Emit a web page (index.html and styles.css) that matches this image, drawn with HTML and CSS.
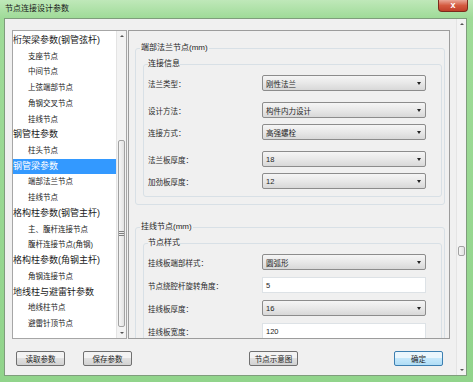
FILE: index.html
```html
<!DOCTYPE html>
<html lang="zh">
<head>
  <meta charset="UTF-8">
  <title>节点连接设计参数</title>
  <link rel="stylesheet" href="styles.css">
</head>
<body>
  <div class="window">
    <div class="titlebar">
      <span class="title">节点连接设计参数</span>
      <div class="close-btn">x</div>
    </div>

    <div class="client">
      <div class="content">
        <div class="main">
          <!-- parameter tree -->
          <div class="tree">
            <ul class="tree-list">
              <li class="node top">桁架梁参数(钢管弦杆)</li>
              <li class="node sub">支座节点</li>
              <li class="node sub">中间节点</li>
              <li class="node sub">上弦端部节点</li>
              <li class="node sub">角钢交叉节点</li>
              <li class="node sub">挂线节点</li>
              <li class="node top">钢管柱参数</li>
              <li class="node sub">柱头节点</li>
              <li class="node top selected">钢管梁参数</li>
              <li class="node sub">端部法兰节点</li>
              <li class="node sub">挂线节点</li>
              <li class="node top">格构柱参数(钢管主杆)</li>
              <li class="node sub">主、腹杆连接节点</li>
              <li class="node sub">腹杆连接节点(角钢)</li>
              <li class="node top">格构柱参数(角钢主杆)</li>
              <li class="node sub">角钢连接节点</li>
              <li class="node top">地线柱与避雷针参数</li>
              <li class="node sub">地线柱节点</li>
              <li class="node sub">避雷针顶节点</li>
            </ul>
            <div class="vscroll tree-scroll">
              <span class="arrow up"></span>
              <div class="track"><div class="thumb"><span class="grip"></span></div></div>
              <span class="arrow down"></span>
            </div>
          </div>

          <!-- settings panel -->
          <div class="panel">
            <fieldset class="outer">
              <legend>端部法兰节点(mm)</legend>
              <fieldset class="inner">
                <legend>连接信息</legend>
                <div class="row">
                  <span class="label">法兰类型：</span>
                  <div class="select">刚性法兰</div>
                </div>
                <div class="row wide">
                  <span class="label">设计方法：</span>
                  <div class="select">构件内力设计</div>
                </div>
                <div class="row">
                  <span class="label">连接方式：</span>
                  <div class="select">高强螺栓</div>
                </div>
                <div class="row wide">
                  <span class="label">法兰板厚度：</span>
                  <div class="select">18</div>
                </div>
                <div class="row">
                  <span class="label">加劲板厚度：</span>
                  <div class="select">12</div>
                </div>
              </fieldset>
            </fieldset>

            <fieldset class="outer">
              <legend>挂线节点(mm)</legend>
              <fieldset class="inner">
                <legend>节点样式</legend>
                <div class="row">
                  <span class="label">挂线板端部样式：</span>
                  <div class="select">圆弧形</div>
                </div>
                <div class="row mid">
                  <span class="label">节点绕腔杆旋转角度：</span>
                  <div class="textbox">5</div>
                </div>
                <div class="row mid">
                  <span class="label">挂线板厚度：</span>
                  <div class="select">16</div>
                </div>
                <div class="row mid">
                  <span class="label">挂线板宽度：</span>
                  <div class="textbox">120</div>
                </div>
              </fieldset>
            </fieldset>
          </div>
        </div>

        <div class="buttons">
          <div class="btn">读取参数</div>
          <div class="btn">保存参数</div>
          <div class="btn btn-diagram">节点示意图</div>
          <div class="btn btn-ok">确定</div>
        </div>
      </div>

      <div class="vscroll page-scroll">
        <span class="arrow up"></span>
        <div class="track"><div class="thumb"></div></div>
        <span class="arrow down"></span>
      </div>
    </div>
  </div>
</body>
</html>
```

FILE: styles.css
```css
* {
  margin: 0;
  padding: 0;
  box-sizing: border-box;
}

body {
  width: 473px;
  height: 382px;
  overflow: hidden;
  font-family: "Liberation Sans", "Noto Sans CJK SC", sans-serif;
  font-size: 8px;
  color: #1e1e1e;
}

.window {
  width: 473px;
  height: 382px;
  display: flex;
  flex-direction: column;
  background: linear-gradient(#bfe8b9, #9fdb98 18px, #91d48b);
}

.titlebar {
  height: 18px;
  display: flex;
  justify-content: space-between;
  padding-left: 5px;
}

.title {
  line-height: 18px;
  color: #1a1a1a;
}

.close-btn {
  width: 30px;
  height: 12px;
  margin-right: 5px;
  border: 1px solid #7c2a1c;
  border-top: none;
  border-radius: 0 0 4px 4px;
  background: linear-gradient(#e9a797, #d45a40 50%, #c0402a);
  color: #fff;
  font-size: 9px;
  font-weight: bold;
  line-height: 10px;
  text-align: center;
}

.client {
  flex: 1;
  margin: 0 6px 6px 4px;
  display: flex;
  background: #f0f0f0;
  border: 1px solid #7f9d7c;
}

.content {
  flex: 1;
  padding: 11px 6px 0 7px;
}

.main {
  display: flex;
  height: 309px;
}

/* tree */
.tree {
  width: 115px;
  margin-right: 1px;
  display: flex;
  background: #fff;
  border: 1px solid #a6a6a6;
}

.tree-list {
  flex: 1;
  list-style: none;
  padding-top: 2px;
  overflow: hidden;
}

.node {
  height: 15.72px;
  line-height: 15.72px;
  white-space: nowrap;
  color: #1a1a1a;
}

.node.top {
  font-size: 9px;
}

.node.sub {
  font-size: 7.5px;
  padding-left: 15px;
}

.node.selected {
  background: #3399ff;
  color: #fff;
}

/* scrollbars */
.vscroll {
  width: 10px;
  display: flex;
  flex-direction: column;
  background: #f3f3f3;
  border-left: 1px solid #e4e4e4;
}

.arrow {
  height: 10px;
  display: flex;
  align-items: center;
  justify-content: center;
}

.arrow.up::before {
  content: "";
  border-left: 2px solid transparent;
  border-right: 2px solid transparent;
  border-bottom: 2px solid #555;
}

.arrow.down::before {
  content: "";
  border-left: 2px solid transparent;
  border-right: 2px solid transparent;
  border-top: 2px solid #555;
}

.track {
  flex: 1;
}

.thumb {
  margin: 0 1px;
  border: 1px solid #a2a2a2;
  border-radius: 2px;
  background: linear-gradient(to right, #f6f6f6, #e3e3e3);
}

.tree-scroll .thumb {
  margin-top: 99px;
  height: 187px;
  display: flex;
  align-items: center;
  justify-content: center;
}

.grip {
  width: 5px;
  height: 5px;
  background: repeating-linear-gradient(#808080 0 1px, transparent 1px 2px);
}

.page-scroll .thumb {
  margin-top: 217px;
  height: 10px;
}

/* settings panel */
.panel {
  width: 322px;
  padding-top: 12px;
  overflow: hidden;
  background: #f0f0f0;
  border: 1px solid #9c9c9c;
}

.outer {
  margin: 0 4px 0 6px;
  padding: 6px 2px 7px 7px;
  border: 1px solid #d8e0e6;
  border-radius: 3px;
}

.outer + .outer {
  margin-top: 17px;
}

.outer > legend {
  margin-left: -3px;
  padding: 0 1px;
  line-height: 10px;
}

.inner {
  padding: 6px 0 7px 4px;
  border: 1px solid #d8e0e6;
  border-radius: 3px;
}

.inner > legend {
  line-height: 10px;
}

.row {
  display: flex;
  align-items: center;
  height: 16px;
}

.row + .row {
  margin-top: 6px;
}

.row.wide {
  margin-top: 11px;
}

.row.mid {
  margin-top: 7px;
}

.label {
  width: 114px;
  font-size: 7.5px;
  color: #2a2a2a;
}

.select {
  width: 164px;
  height: 16px;
  display: flex;
  align-items: center;
  justify-content: space-between;
  padding: 0 4px 0 3px;
  border: 1px solid #8c8c8c;
  border-radius: 2px;
  background: linear-gradient(#f5f5f5, #e8e8e8 50%, #d8d8d8);
  font-size: 7.5px;
}

.select::after {
  content: "";
  border-left: 2.5px solid transparent;
  border-right: 2.5px solid transparent;
  border-top: 3px solid #222;
}

.textbox {
  width: 164px;
  height: 16px;
  display: flex;
  align-items: center;
  padding-left: 3px;
  background: #fff;
  border: 1px solid #dde2e6;
  font-size: 7.5px;
}

/* bottom buttons */
.buttons {
  display: flex;
  margin-top: 12px;
  padding-left: 4px;
}

.btn {
  width: 49px;
  height: 15px;
  display: flex;
  align-items: center;
  justify-content: center;
  border: 1px solid #707070;
  border-radius: 2px;
  background: linear-gradient(#f3f3f3 50%, #e0e0e0 50%, #d2d2d2);
  font-size: 7.5px;
}

.btn + .btn {
  margin-left: 18px;
}

.btn.btn-diagram {
  margin-left: 117px;
}

.btn.btn-ok {
  margin-left: 96px;
  border-color: #3c7fb1;
  background: linear-gradient(#eaf6fd 50%, #c5e8fb 50%, #b0ddf6);
}
```
